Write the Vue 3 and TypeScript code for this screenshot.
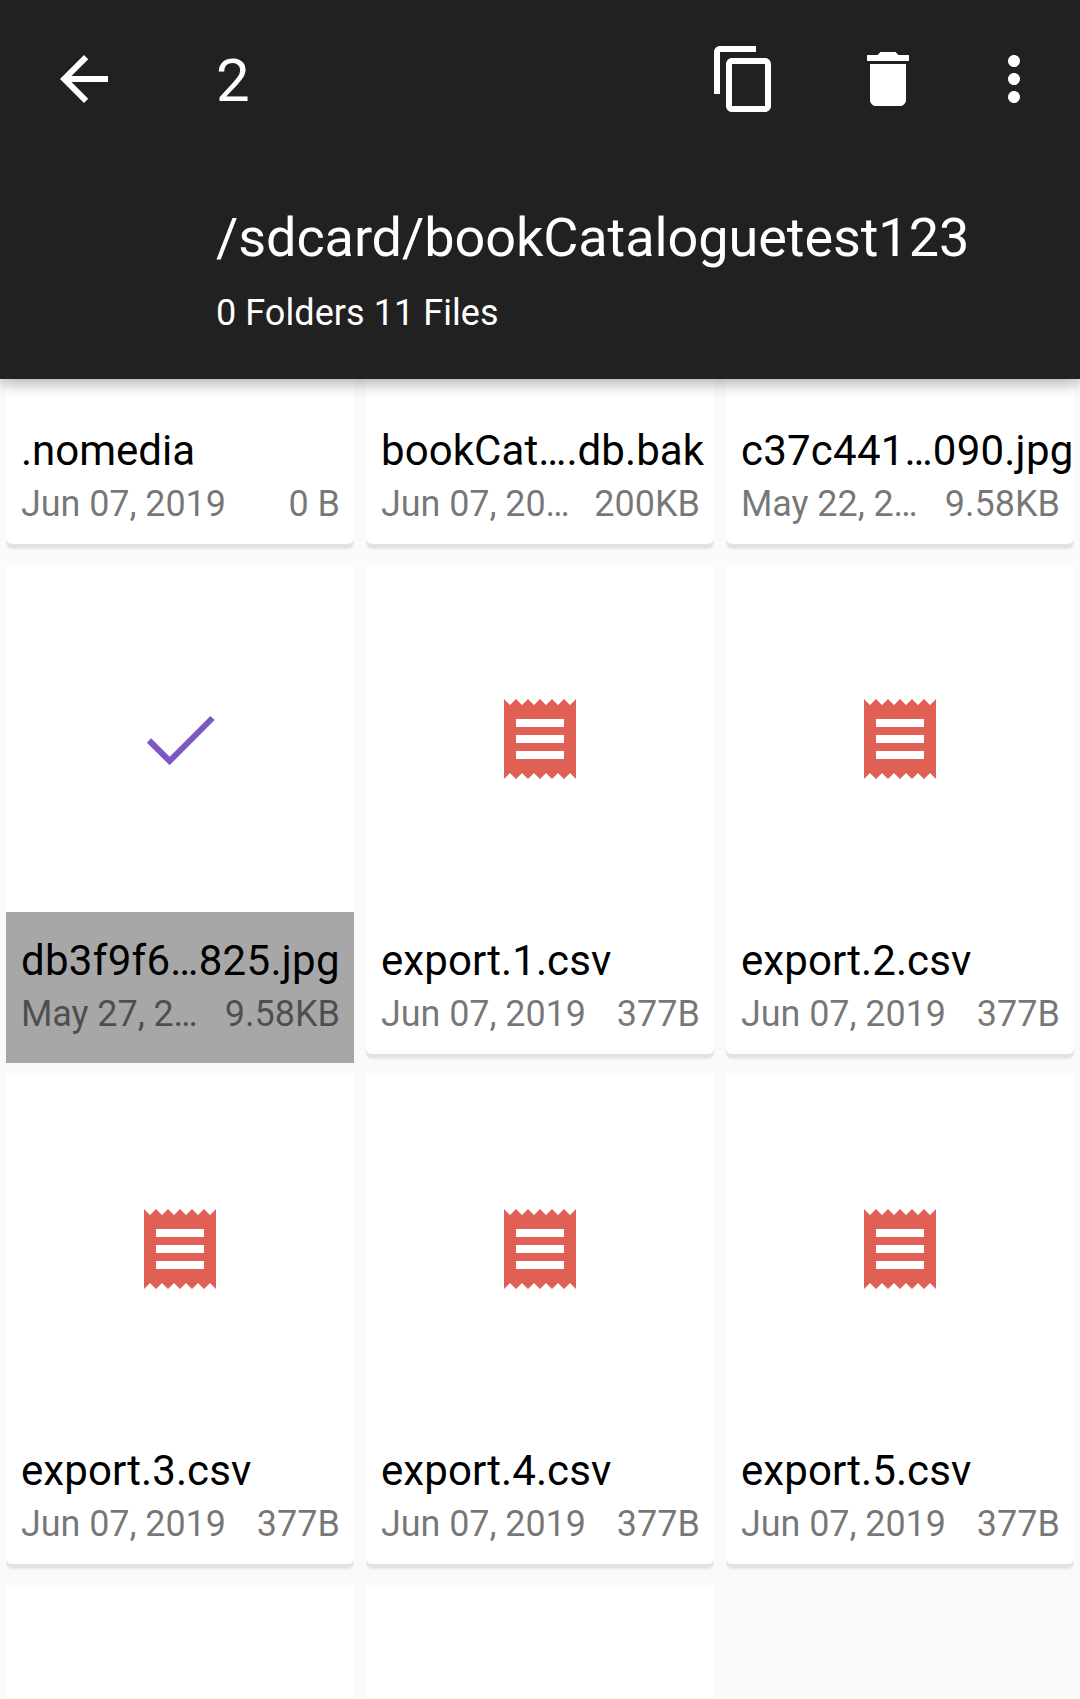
<script setup lang="ts">
interface FileItem {
  name: string
  date: string
  size: string
  icon: 'none' | 'receipt' | 'check'
  tracking?: number
}

const title = '/sdcard/bookCataloguetest123'
const summary = '0 Folders 11 Files'
const selectedCount = '2'

const files: FileItem[] = [
  { name: '.nomedia', date: 'Jun 07, 2019', size: '0 B', icon: 'none', tracking: 0 },
  { name: 'bookCat….db.bak', date: 'Jun 07, 20…', size: '200KB', icon: 'none' },
  { name: 'c37c441…090.jpg', date: 'May 22, 2…', size: '9.58KB', icon: 'none', tracking: 0.22 },
  { name: 'db3f9f6…825.jpg', date: 'May 27, 2…', size: '9.58KB', icon: 'check', tracking: 0.29 },
  { name: 'export.1.csv', date: 'Jun 07, 2019', size: '377B', icon: 'receipt' },
  { name: 'export.2.csv', date: 'Jun 07, 2019', size: '377B', icon: 'receipt' },
  { name: 'export.3.csv', date: 'Jun 07, 2019', size: '377B', icon: 'receipt' },
  { name: 'export.4.csv', date: 'Jun 07, 2019', size: '377B', icon: 'receipt' },
  { name: 'export.5.csv', date: 'Jun 07, 2019', size: '377B', icon: 'receipt' },
  { name: '', date: '', size: '', icon: 'none' },
  { name: '', date: '', size: '', icon: 'none' },
]
</script>

<template>
  <div class="screen">
    <header class="appbar">
      <div class="toolbar">
        <svg class="icon back" viewBox="0 0 24 24"><path d="M20 11H7.83l5.59-5.59L12 4l-8 8 8 8 1.41-1.41L7.83 13H20v-2z" /></svg>
        <span class="count">{{ selectedCount }}</span>
        <svg class="icon copy" viewBox="0 0 24 24"><path d="M16 1H4c-1.1 0-2 .9-2 2v14h2V3h12V1zm3 4H8c-1.1 0-2 .9-2 2v14c0 1.1.9 2 2 2h11c1.1 0 2-.9 2-2V7c0-1.1-.9-2-2-2zm0 16H8V7h11v14z" /></svg>
        <svg class="icon trash" viewBox="0 0 24 24"><path d="M6 19c0 1.1.9 2 2 2h8c1.1 0 2-.9 2-2V7H6v12zM19 4h-3.5l-1-1h-5l-1 1H5v2h14V4z" /></svg>
        <svg class="icon more" viewBox="0 0 24 24"><path d="M12 8c1.1 0 2-.9 2-2s-.9-2-2-2-2 .9-2 2 .9 2 2 2zm0 2c-1.1 0-2 .9-2 2s.9 2 2 2 2-.9 2-2-.9-2-2-2zm0 6c-1.1 0-2 .9-2 2s.9 2 2 2 2-.9 2-2-.9-2-2-2z" /></svg>
      </div>
      <div class="path">{{ title }}</div>
      <div class="summary">{{ summary }}</div>
    </header>
    <main class="list">
      <div class="grid">
        <div v-for="(file, i) in files" :key="i" class="cell" :class="{ selected: file.icon === 'check' }">
          <div class="card">
            <div class="thumb">
              <svg v-if="file.icon === 'receipt'" class="receipt" viewBox="0 0 24 24">
                <path d="M18 17H6v-2h12v2zm0-4H6v-2h12v2zm0-4H6V7h12v2zM3 22l1.5-1.5L6 22l1.5-1.5L9 22l1.5-1.5L12 22l1.5-1.5L15 22l1.5-1.5L18 22l1.5-1.5L21 22V2l-1.5 1.5L18 2l-1.5 1.5L15 2l-1.5 1.5L12 2l-1.5 1.5L9 2 7.500 3.500 6 2 4.500 3.500 3 2v20z" />
              </svg>
              <svg v-else-if="file.icon === 'check'" class="check" viewBox="0 0 96 96">
                <path d="M17 49.500L37.600 70L80.500 27" />
              </svg>
            </div>
            <div class="info">
              <div class="name" :style="{ letterSpacing: (file.tracking ?? 0.08) + 'px' }">{{ file.name }}</div>
              <div class="meta">
                <span class="date">{{ file.date }}</span>
                <span>{{ file.size }}</span>
              </div>
            </div>
          </div>
        </div>
      </div>
    </main>
  </div>
</template>

<style>
body {
  margin: 0;
  background: #fafafa;
}
</style>

<style scoped>
.screen {
  width: 1080px;
  height: 1699px;
  display: flex;
  flex-direction: column;
  overflow: hidden;
  background: #fafafa;
  font-family: Roboto, "Noto Sans", sans-serif;
}
.appbar {
  position: relative;
  z-index: 1;
  flex: none;
  box-sizing: border-box;
  height: 379px;
  background: #212121;
  color: #fff;
  box-shadow: 0 5px 14px rgba(0, 0, 0, 0.3);
}
.toolbar {
  display: flex;
  align-items: center;
  height: 158px;
  padding: 0 30px 0 48px;
}
.icon {
  display: block;
  width: 72px;
  height: 72px;
  fill: currentColor;
}
.count {
  margin-left: 96px;
  padding-top: 3px;
  font-size: 60px;
  line-height: 70px;
}
.copy {
  margin-left: auto;
}
.trash {
  margin-left: 72px;
}
.more {
  margin-left: 54px;
}
.path {
  margin: 48px 0 0 216px;
  font-size: 54px;
  line-height: 64px;
  letter-spacing: -0.07px;
  white-space: nowrap;
}
.summary {
  margin: 22px 0 0 216px;
  font-size: 36px;
  line-height: 42px;
  letter-spacing: 0.06px;
}
.list {
  flex: 1;
  min-height: 0;
  overflow: hidden;
}
/* The list is scrolled so the first row sits partly under the app bar. */
.grid {
  display: grid;
  grid-template-columns: repeat(3, 348px);
  grid-auto-rows: 498px;
  gap: 12px;
  margin-top: -324px;
  padding: 0 6px;
}
.cell {
  overflow: hidden;
}
.card {
  height: 489px;
  background: #fff;
  border-radius: 0 0 6px 6px;
  box-shadow: 0 5px 2px rgba(0, 0, 0, 0.09);
}
.thumb {
  box-sizing: border-box;
  height: 347px;
  padding-top: 1px;
  display: flex;
  align-items: center;
  justify-content: center;
}
.receipt {
  width: 96px;
  height: 96px;
  fill: #e06055;
}
.check {
  width: 96px;
  height: 96px;
  fill: none;
  stroke: #7e57c2;
  stroke-width: 6;
}
.info {
  box-sizing: border-box;
  height: 142px;
  padding: 24px 14px 0 15px;
}
.selected .card {
  height: 498px;
  box-shadow: none;
}
.selected .info {
  height: 151px;
  background: #a7a7a7;
}
.name {
  font-size: 42px;
  line-height: 49px;
  color: #000;
  white-space: nowrap;
}
.meta {
  display: flex;
  justify-content: space-between;
  margin-top: 8px;
  font-size: 36px;
  line-height: 42px;
  color: rgba(0, 0, 0, 0.54);
  white-space: nowrap;
}
.date {
  letter-spacing: -0.09px;
}
</style>
